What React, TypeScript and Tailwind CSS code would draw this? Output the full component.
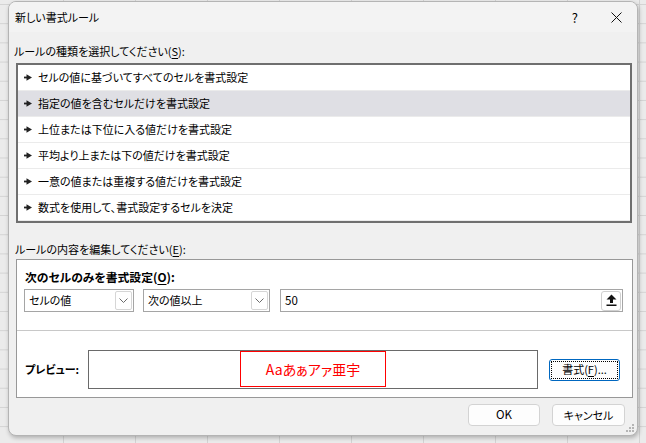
import React from "react";

const font = "font-['Noto_Sans_CJK_JP','Noto_Sans',sans-serif]";

function Bullet() {
  return (
    <svg width="8" height="7" viewBox="0 0 8 7" className="shrink-0">
      <rect x="0" y="2.6" width="3.5" height="1.8" fill="#222" />
      <polygon points="2.5,0.3 8,3.5 2.5,6.7" fill="#222" />
    </svg>
  );
}

function Chevron() {
  return (
    <svg width="9" height="6" viewBox="0 0 9 6">
      <polyline points="0.5,0.5 4.5,4.5 8.5,0.5" fill="none" stroke="#6a6a6a" strokeWidth="1" />
    </svg>
  );
}

function Select({ label, w }: { label: string; w: string }) {
  return (
    <div className={`${w} h-[23px] border border-[#a5a5a5] bg-white flex items-center justify-between pl-[4px] pr-[1px]`}>
      <span className="text-[11px] leading-none text-black">{label}</span>
      <div className="w-[17px] h-[19px] border border-[#d6d6d6] rounded-[2px] flex items-center justify-center">
        <Chevron />
      </div>
    </div>
  );
}

const rules = [
  "セルの値に基づいてすべてのセルを書式設定",
  "指定の値を含むセルだけを書式設定",
  "上位または下位に入る値だけを書式設定",
  "平均より上または下の値だけを書式設定",
  "一意の値または重複する値だけを書式設定",
  "数式を使用して、書式設定するセルを決定",
];

export default function App() {
  return (
    <div
      className={`relative w-[646px] h-[443px] overflow-hidden bg-[#ebebeb] bg-[linear-gradient(to_right,#d3d3d3_1px,transparent_1px),linear-gradient(to_bottom,#d3d3d3_1px,transparent_1px)] bg-[size:72px_19.2px] bg-[position:-9px_4px] ${font} [font-feature-settings:'palt'] text-black`}
    >
      <div className="absolute left-[8px] top-[1px] w-[630px] h-[435px] rounded-[8px] border border-[#b4b4b4] bg-[#f0f0f0] shadow-[1px_2px_4px_rgba(0,0,0,0.25)] flex flex-col overflow-hidden">
        {/* title bar */}
        <div className="h-[30px] bg-[#f3f3f3] flex items-center pl-[6px] shrink-0">
          <span className="text-[11px] leading-none">新しい書式ルール</span>
          <span className="ml-auto mr-[33px] text-[13px] leading-none">?</span>
          <svg width="11" height="11" viewBox="0 0 11 11" className="mr-[15px]">
            <path d="M0.5 0.5 L10.5 10.5 M10.5 0.5 L0.5 10.5" stroke="#111" strokeWidth="1" />
          </svg>
        </div>

        {/* label 1 */}
        <div className="mt-[11px] pl-[5px] h-[16px] flex items-center text-[11px] leading-none">
          ルールの種類を選択してください(<span className="underline underline-offset-2">S</span>):
        </div>

        {/* list */}
        <div className="mt-[4px] ml-[7px] w-[616px] border-2 border-[#6f6f6f] bg-white flex flex-col">
          {rules.map((r, i) => (
            <div
              key={i}
              className={`h-[26px] border-b border-[#ebebeb] flex items-center gap-[6px] pl-[6px] ${i === 1 ? "bg-[#dfdfe4]" : "bg-white"}`}
            >
              <Bullet />
              <span className="text-[11px] leading-none">{r}</span>
            </div>
          ))}
        </div>

        {/* label 2 */}
        <div className="mt-[18px] pl-[6px] h-[16px] flex items-center text-[11px] leading-none">
          ルールの内容を編集してください(<span className="underline underline-offset-2">E</span>):
        </div>

        {/* content box */}
        <div className="mt-[2px] ml-[7px] w-[617px] h-[139px] border border-[#989898] bg-white flex flex-col">
          <div className="mt-[9px] pl-[8px] h-[16px] flex items-center text-[11.8px] font-bold leading-none">
            次のセルのみを書式設定(<span className="underline underline-offset-2">O</span>):
          </div>
          <div className="mt-[4px] pl-[7px] flex items-center">
            <Select label="セルの値" w="w-[110px]" />
            <div className="w-[9px]" />
            <Select label="次の値以上" w="w-[127px]" />
            <div className="w-[10px]" />
            <div className="w-[343px] h-[23px] border border-[#a5a5a5] bg-white flex items-center justify-between pl-[4px] pr-[1px]">
              <span className="text-[11.5px] leading-none">50</span>
              <div className="w-[20px] h-[20px] border border-[#d0d0d0] rounded-[3px] bg-white flex items-center justify-center">
                <svg width="11" height="13" viewBox="0 0 11 13">
                  <polygon points="5.5,0.5 10.5,5.5 7,5.5 7,9 4,9 4,5.5 0.5,5.5" fill="#111" />
                  <rect x="0.5" y="10.5" width="10" height="1.5" fill="#111" />
                </svg>
              </div>
            </div>
          </div>
          <div className="mt-[18px] h-px bg-[#c8c8c8]" />
          <div className="mt-[19px] pl-[8px] flex items-center">
            <span className="w-[63px] text-[11px] font-bold leading-none">プレビュー:</span>
            <div className="w-[450px] h-[39px] border border-[#6a6a6a] bg-white flex justify-center">
              <div className="w-[146px] h-[36px] border border-[#ff0000] flex items-center justify-center">
                <span className="text-[14px] leading-none text-[#ff0000]">Aaあぁアァ亜宇</span>
              </div>
            </div>
            <div className="ml-[11px] w-[71px] h-[22px] rounded-[3px] border border-[#0067c0] p-[1px] bg-[#fdfdfd]">
              <div className="w-full h-full border border-dotted border-black flex items-center justify-center text-[11px] leading-none">
                書式(<span className="underline underline-offset-2">F</span>)...
              </div>
            </div>
          </div>
        </div>

        {/* buttons */}
        <div className="mt-[6px] flex justify-end pr-[12px] gap-[12px]">
          <div className="w-[72px] h-[22px] rounded-[4px] border border-[#d3d3d3] bg-[#fdfdfd] flex items-center justify-center text-[11.5px] leading-none">
            OK
          </div>
          <div className="w-[73px] h-[22px] rounded-[4px] border border-[#d3d3d3] bg-[#fdfdfd] flex items-center justify-center text-[11px] leading-none">
            キャンセル
          </div>
        </div>

        {/* resize grip */}
        <svg width="8" height="8" viewBox="0 0 8 8" className="absolute right-[3px] bottom-[3px]">
          <rect x="6" y="0" width="2" height="2" fill="#b5b5b5" />
          <rect x="3" y="3" width="2" height="2" fill="#b5b5b5" />
          <rect x="6" y="3" width="2" height="2" fill="#b5b5b5" />
          <rect x="0" y="6" width="2" height="2" fill="#b5b5b5" />
          <rect x="3" y="6" width="2" height="2" fill="#b5b5b5" />
          <rect x="6" y="6" width="2" height="2" fill="#b5b5b5" />
        </svg>
      </div>
    </div>
  );
}
